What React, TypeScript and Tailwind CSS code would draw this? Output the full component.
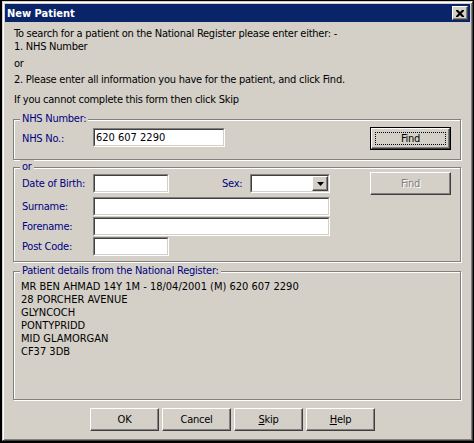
import React from "react";

const raised =
  "border border-t-white border-l-white border-b-[#404040] border-r-[#404040] shadow-[inset_-1px_-1px_0_#808080] bg-[#d4d0c8]";

function Sunken({
  className = "",
  children,
}: {
  className?: string;
  children?: React.ReactNode;
}) {
  return (
    <div
      className={`border border-t-[#808080] border-l-[#808080] border-b-white border-r-white ${className}`}
    >
      <div className="h-full border border-t-[#404040] border-l-[#404040] border-b-[#d4d0c8] border-r-[#d4d0c8] bg-white flex items-center">
        {children}
      </div>
    </div>
  );
}

function Group({
  legend,
  className = "",
  children,
}: {
  legend: string;
  className?: string;
  children?: React.ReactNode;
}) {
  return (
    <div
      className={`relative ml-[8px] w-[448px] border border-[#808080] shadow-[1px_1px_0_#fff,inset_1px_1px_0_#fff] ${className}`}
    >
      <span className="absolute left-[6px] top-[-8px] bg-[#d4d0c8] px-[2px] leading-[13px] text-[#000080]">
        {legend}
      </span>
      {children}
    </div>
  );
}

function Label({ text, w }: { text: string; w: string }) {
  return <span className={`${w} leading-[13px] text-[#000080]`}>{text}</span>;
}

function Button({ children }: { children: React.ReactNode }) {
  return (
    <button
      className={`${raised} w-[69px] h-[23px] flex items-center justify-center leading-[13px] text-black`}
    >
      {children}
    </button>
  );
}

export default function App() {
  return (
    <div className="w-[474px] h-[443px] bg-black pt-[1px] pl-[2px] font-['DejaVu_Sans_Condensed','Liberation_Sans',sans-serif] text-[11px] tracking-[-0.25px] text-black">
      <div className="w-[471px] h-[440px] bg-[#d4d0c8] border border-t-[#d4d0c8] border-l-[#d4d0c8] border-b-[#404040] border-r-[#404040] shadow-[inset_1px_1px_0_#fff,inset_-1px_-1px_0_#808080] p-[2px] flex flex-col">
        {/* title bar */}
        <div className="h-[18px] bg-[#0a246a] flex items-center justify-between pl-[2px] pr-[2px]">
          <span className="text-white font-bold leading-[13px] tracking-normal">New Patient</span>
          <div className={`${raised} w-[16px] h-[14px] flex items-center justify-center`}>
            <svg width="8" height="7" viewBox="0 0 8 7">
              <path d="M0 0h2l2 2 2-2h2v1L5.5 3.5 8 6v1H6L4 5 2 7H0V6l2.5-2.5L0 1z" fill="#000" />
            </svg>
          </div>
        </div>

        {/* intro text */}
        <div className="pl-[9px] flex flex-col">
          <div className="mt-[5px] h-[13px] leading-[13px]">
            To search for a patient on the National Register please enter either: -
          </div>
          <div className="h-[13px] leading-[13px]">1. NHS Number</div>
          <div className="mt-[4px] h-[13px] leading-[13px]">or</div>
          <div className="mt-[3px] h-[13px] leading-[13px]">
            2. Please enter all information you have for the patient, and click Find.
          </div>
          <div className="mt-[7px] h-[13px] leading-[13px]">
            If you cannot complete this form then click Skip
          </div>
        </div>

        {/* NHS number */}
        <Group legend="NHS Number:" className="mt-[13px] h-[41px]">
          <div className="flex items-start pt-[7px] pl-[8px] pr-[9px]">
            <div className="flex items-center h-[19px] mt-[1px]">
              <Label text="NHS No.:" w="w-[71px] pt-[2px]" />
              <Sunken className="w-[132px] h-[19px]">
                <span className="pl-[1px] leading-[13px] tracking-normal">620 607 2290</span>
              </Sunken>
            </div>
            <div className="ml-auto w-[81px] h-[23px] border border-black">
              <div className={`${raised} w-full h-full p-[3px]`}>
                <div className="w-full h-full border border-dotted border-black flex items-center justify-center leading-[13px]">
                  Find
                </div>
              </div>
            </div>
          </div>
        </Group>

        {/* or */}
        <Group legend="or" className="mt-[7px] h-[95px]">
          <div className="flex items-start pt-[4px] pl-[8px] pr-[9px]">
            <div className="flex flex-col mt-[2px]">
              <div className="flex items-center h-[19px]">
                <Label text="Date of Birth:" w="w-[71px]" />
                <Sunken className="w-[76px] h-[19px]" />
                <span className="ml-[53px] w-[28px] leading-[13px] text-[#000080]">Sex:</span>
                <Sunken className="w-[80px] h-[19px]">
                  <div className={`${raised} ml-auto w-[16px] h-full flex items-center justify-center`}>
                    <svg width="7" height="4" viewBox="0 0 7 4">
                      <path d="M0 0h7L3.5 4z" fill="#000" />
                    </svg>
                  </div>
                </Sunken>
              </div>
              <div className="flex items-center h-[19px] mt-[4px]">
                <Label text="Surname:" w="w-[71px]" />
                <Sunken className="w-[237px] h-[19px]" />
              </div>
              <div className="flex items-center h-[19px] mt-[1px]">
                <Label text="Forename:" w="w-[71px]" />
                <Sunken className="w-[237px] h-[19px]" />
              </div>
              <div className="flex items-center h-[19px] mt-[1px]">
                <Label text="Post Code:" w="w-[71px]" />
                <Sunken className="w-[76px] h-[19px]" />
              </div>
            </div>
            <div
              className={`${raised} ml-auto w-[81px] h-[23px] flex items-center justify-center leading-[13px] text-[#808080] [text-shadow:1px_1px_0_#fff]`}
            >
              Find
            </div>
          </div>
        </Group>

        {/* patient details */}
        <Group legend="Patient details from the National Register:" className="mt-[9px] h-[129px]">
          <div className="pt-[8px] pl-[7px] flex flex-col leading-[13px] tracking-normal">
            <div>MR BEN AHMAD 14Y 1M - 18/04/2001 (M) 620 607 2290</div>
            <div>28 PORCHER AVENUE</div>
            <div>GLYNCOCH</div>
            <div>PONTYPRIDD</div>
            <div>MID GLAMORGAN</div>
            <div>CF37 3DB</div>
          </div>
        </Group>

        {/* buttons */}
        <div className="mt-[8px] ml-[85px] flex gap-[3px]">
          <Button>OK</Button>
          <Button>Cancel</Button>
          <Button>
            <u>S</u>kip
          </Button>
          <Button>
            <u>H</u>elp
          </Button>
        </div>
      </div>
    </div>
  );
}
